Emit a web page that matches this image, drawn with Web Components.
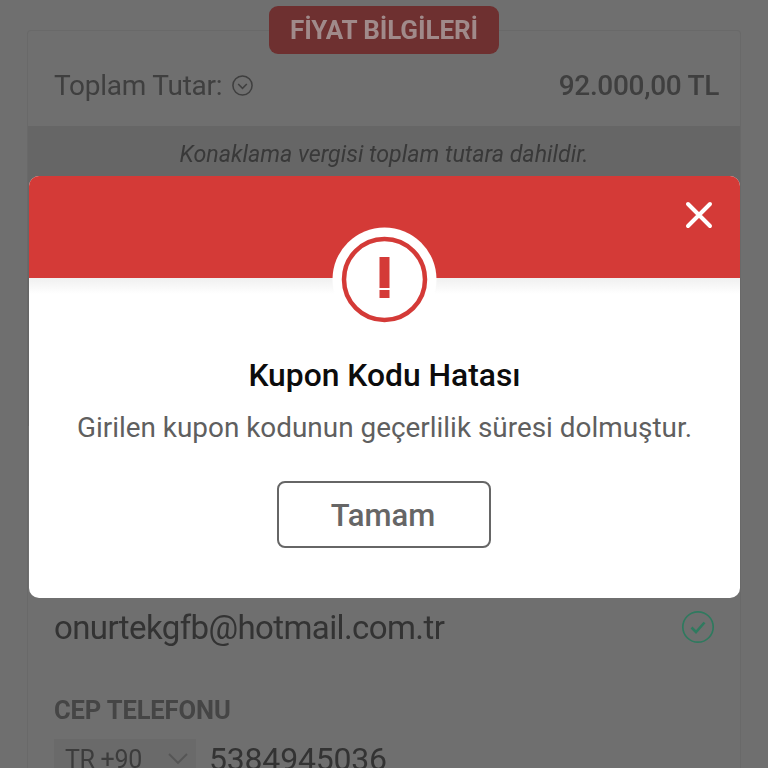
<!DOCTYPE html>
<html lang="tr">
<head>
<meta charset="utf-8">
<title>Kupon Kodu Hatası</title>
<style>
  html, body { margin: 0; height: 768px; overflow: hidden; background: #6f6f6f; font-family: Roboto, "Liberation Sans", sans-serif; }
</style>
</head>
<body>
<checkout-page></checkout-page>
<alert-modal heading="Kupon Kodu Hatası" action="Tamam">Girilen kupon kodunun geçerlilik süresi dolmuştur.</alert-modal>

<script>
class CheckoutPage extends HTMLElement {
  constructor() {
    super();
    this.attachShadow({ mode: 'open' });
  }

  connectedCallback() {
    this.shadowRoot.innerHTML = `
      <style>
        :host {
          display: block;
          height: 768px;
          overflow: hidden;
          padding: 6px 27px 0;
          box-sizing: border-box;
          color: #383838;
          font-family: Roboto, "Liberation Sans", sans-serif;
          filter: blur(0.4px);
        }
        .panel {
          margin-top: 24px;
          border: 1px solid #696969;
          border-bottom: 0;
          border-radius: 4px 4px 0 0;
          height: 800px;
          display: flex;
          flex-direction: column;
        }
        .badge-wrap { height: 0; display: flex; justify-content: center; }
        .badge {
          width: 230px;
          height: 48px;
          margin-top: -25px;
          flex: none;
          background: #6e3030;
          border-radius: 9px;
          color: #a08a8a;
          font-size: 26px;
          letter-spacing: -0.1px;
          font-weight: 700;
          display: flex;
          align-items: center;
          justify-content: center;
        }
        .total {
          height: 95px;
          padding: 14px 21px 0 26px;
          display: flex;
          align-items: center;
          justify-content: space-between;
          box-sizing: border-box;
          font-size: 28px;
          letter-spacing: -0.25px;
        }
        .total .label { display: flex; align-items: center; gap: 10px; color: #3f3f3f; }
        .total svg { width: 23px; height: 23px; margin-left: -1px; }
        .amount { font-weight: 500; color: #3f3f3f; letter-spacing: -0.3px; }
        .note {
          height: 300px;
          background: #666;
          padding-top: 14px;
          box-sizing: border-box;
          text-align: center;
          font-style: italic;
          font-size: 23.250px;
          color: #393939;
        }
        .form {
          padding: 0 26px;
          margin-top: 181px;
        }
        .email {
          display: flex;
          align-items: center;
          justify-content: space-between;
          font-size: 33px;
          letter-spacing: -0.6px;
          height: 40px;
          color: #333;
        }
        .email svg { width: 34px; height: 34px; margin-right: -1px; }
        .field-label {
          margin-top: 49px;
          font-size: 25.500px;
          font-weight: 700;
          letter-spacing: -0.1px;
          color: #454545;
          line-height: 28px;
        }
        .phone { display: flex; align-items: center; gap: 13px; margin-top: 15px; }
        .code {
          width: 142px;
          height: 40px;
          box-sizing: border-box;
          background: #6a6a6a;
          padding-left: 11px;
          display: flex;
          align-items: center;
          justify-content: space-between;
          font-size: 25px;
          letter-spacing: -0.3px;
          color: #3c3c3c;
        }
        .code svg { width: 20px; height: 12px; margin-right: 8px; }
        .number { font-size: 32px; letter-spacing: -0.2px; color: #333; }
      </style>
      <section class="panel">
        <div class="badge-wrap"><div class="badge">FİYAT BİLGİLERİ</div></div>
        <div class="total">
          <span class="label">Toplam Tutar:
            <svg viewBox="0 0 24 24" fill="none" stroke="#3f3f3f" stroke-width="1.6">
              <circle cx="12" cy="12" r="10"/>
              <path d="M7.5 10.5 12 15l4.500-4.500"/>
            </svg>
          </span>
          <span class="amount">92.000,00 TL</span>
        </div>
        <div class="note">Konaklama vergisi toplam tutara dahildir.</div>
        <div class="form">
          <div class="email">
            <span>onurtekgfb@hotmail.com.tr</span>
            <svg viewBox="0 0 34 34" fill="none" stroke="#2f7a5f">
              <circle cx="17" cy="17" r="15.200" stroke-width="1.700"/>
              <path d="M10.500 17.500 15 22l8.500-9.500" stroke-width="2.600"/>
            </svg>
          </div>
          <div class="field-label">CEP TELEFONU</div>
          <div class="phone">
            <div class="code">TR +90
              <svg viewBox="0 0 20 12" fill="none" stroke="#555" stroke-width="1.800"><path d="M1 1l9 9 9-9"/></svg>
            </div>
            <span class="number">5384945036</span>
          </div>
        </div>
      </section>
    `;
  }
}
customElements.define('checkout-page', CheckoutPage);

class AlertModal extends HTMLElement {
  constructor() {
    super();
    this.attachShadow({ mode: 'open' });
  }

  connectedCallback() {
    this.shadowRoot.innerHTML = `
      <style>
        :host {
          display: block;
          position: absolute;
          left: 29px;
          top: 176px;
          width: 711px;
          height: 422px;
          background: #fff;
          border-radius: 10px;
          overflow: hidden;
          font-family: Roboto, "Liberation Sans", sans-serif;
          text-align: center;
        }
        .head {
          position: relative;
          height: 102px;
          background: #d43a37;
        }
        .shade {
          height: 16px;
          background: linear-gradient(#f0f0f0, #fff);
        }
        .close {
          position: absolute;
          right: 27px;
          top: 25px;
          width: 28px;
          height: 28px;
        }
        .badge {
          position: absolute;
          left: 303px;
          top: 51px;
          width: 105px;
          height: 105px;
          z-index: 1;
        }
        h2 {
          margin: 62px 0 0;
          font-size: 31.800px;
          line-height: 38px;
          font-weight: 500;
          color: #0c0c0c;
        }
        p {
          margin: 16px 0 0;
          font-size: 27.900px;
          line-height: 36px;
          color: #5f5f5f;
        }
        button {
          display: block;
          margin: 35px 0 0 248px;
          width: 214px;
          height: 67px;
          background: #fff;
          border: 2px solid #666;
          border-radius: 8px;
          font: 500 31px Roboto, "Liberation Sans", sans-serif;
          color: #666;
          padding: 2px 2px 0 0;
        }
      </style>
      <div class="head">
        <svg class="close" viewBox="0 0 28 28" fill="none" stroke="#fff" stroke-width="4" stroke-linecap="round">
          <path d="M3 3l22 22M25 3 3 25"/>
        </svg>
      </div>
      <svg class="badge" viewBox="0 0 105 105">
        <circle cx="52.500" cy="52.500" r="52" fill="#fff"/>
        <circle cx="52.500" cy="52.500" r="40.500" fill="none" stroke="#d43a37" stroke-width="4.500"/>
        <rect x="47.500" y="30" width="10" height="31" fill="#d43a37"/>
        <rect x="47.500" y="63" width="10" height="8" fill="#d43a37"/>
      </svg>
      <div class="shade"></div>
      <h2>${this.getAttribute('heading')}</h2>
      <p><slot></slot></p>
      <button type="button">${this.getAttribute('action')}</button>
    `;
  }
}
customElements.define('alert-modal', AlertModal);
</script>
</body>
</html>
